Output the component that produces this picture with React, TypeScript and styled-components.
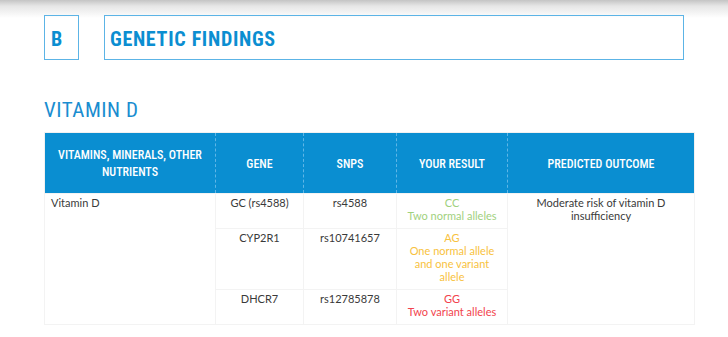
import styled, { createGlobalStyle } from "styled-components";

const GlobalStyle = createGlobalStyle`
  html, body {
    margin: 0;
    padding: 0;
    background: #ffffff;
  }
`;

const Page = styled.div`
  width: 728px;
  height: 337px;
  box-sizing: border-box;
  padding: 15px 34px 0 44px;
  background: linear-gradient(#c4c4c4 0px, #e6e6e6 6px, #ffffff 18px) top / 100% 20px no-repeat,
    #ffffff;
`;

const SectionBar = styled.div`
  display: flex;
  gap: 25px;
  width: 640px;
  height: 45px;
`;

const SectionBox = styled.div<{ $grow?: boolean }>`
  box-sizing: border-box;
  height: 45px;
  width: ${(p) => (p.$grow ? "auto" : "35px")};
  flex: ${(p) => (p.$grow ? "1" : "none")};
  border: 1.5px solid #5cb4e6;
  display: flex;
  align-items: center;
  padding-left: ${(p) => (p.$grow ? "5px" : "6px")};
  padding-top: 2px;
  color: #0b8ed1;
  font-family: "Roboto Condensed", "Liberation Sans Narrow", Roboto, sans-serif;
  font-weight: 700;
  font-size: 20px;
  letter-spacing: 0.7px;
`;

const Heading = styled.h2`
  margin: 38px 0 0;
  color: #1a8dd0;
  font-family: "Roboto Condensed", "Liberation Sans Narrow", Roboto, sans-serif;
  font-weight: 400;
  font-size: 21px;
  letter-spacing: 0.5px;
  line-height: 24px;
  height: 24px;
`;

const Table = styled.table`
  margin-top: 10px;
  width: 650px;
  border-collapse: collapse;
  table-layout: fixed;
  border: 1px solid #f1f1f1;
`;

const HeadCell = styled.th<{ $w: number }>`
  width: ${(p) => p.$w}px;
  height: 61px;
  box-sizing: border-box;
  padding: 2px 8px 0;
  background: #0a8ed1;
  color: #ffffff;
  font-family: "Roboto Condensed", "Liberation Sans Narrow", Roboto, sans-serif;
  font-weight: 500;
  font-size: 12px;
  letter-spacing: 0;
  line-height: 17px;
  text-align: center;
  vertical-align: middle;
  border-left: 1px dashed #5fb6e6;

  &:first-child {
    border-left: none;
  }
`;

const Cell = styled.td<{ $left?: boolean; $tone?: string }>`
  padding: 2px 6px 6px;
  font-family: Lato, "Noto Sans", sans-serif;
  font-size: 11px;
  line-height: 13px;
  color: ${(p) => p.$tone ?? "#3a3a3a"};
  text-align: ${(p) => (p.$left ? "left" : "center")};
  vertical-align: top;
  border: 1px solid #f3f3f3;
`;

const tones = {
  normal: "#9fd17e",
  mixed: "#f8c240",
  variant: "#f2434d",
};

const rows = [
  { gene: "GC (rs4588)", snp: "rs4588", geno: "CC", text: "Two normal alleles", tone: tones.normal },
  { gene: "CYP2R1", snp: "rs10741657", geno: "AG", text: "One normal allele and one variant allele", tone: tones.mixed },
  { gene: "DHCR7", snp: "rs12785878", geno: "GG", text: "Two variant alleles", tone: tones.variant },
];

const App = () => {
  return (
    <Page>
      <GlobalStyle />
      <SectionBar>
        <SectionBox>B</SectionBox>
        <SectionBox $grow>GENETIC FINDINGS</SectionBox>
      </SectionBar>
      <Heading>VITAMIN D</Heading>
      <Table>
        <thead>
          <tr>
            <HeadCell $w={171}>VITAMINS, MINERALS, OTHER NUTRIENTS</HeadCell>
            <HeadCell $w={88}>GENE</HeadCell>
            <HeadCell $w={93}>SNPS</HeadCell>
            <HeadCell $w={111}>YOUR RESULT</HeadCell>
            <HeadCell $w={187}>PREDICTED OUTCOME</HeadCell>
          </tr>
        </thead>
        <tbody>
          {rows.map((r, i) => (
            <tr key={r.snp}>
              {i === 0 && (
                <Cell $left rowSpan={3}>
                  Vitamin D
                </Cell>
              )}
              <Cell>{r.gene}</Cell>
              <Cell>{r.snp}</Cell>
              <Cell $tone={r.tone}>
                {r.geno}
                <br />
                {r.text}
              </Cell>
              {i === 0 && (
                <Cell rowSpan={3}>Moderate risk of vitamin D insufficiency</Cell>
              )}
            </tr>
          ))}
        </tbody>
      </Table>
    </Page>
  );
};

export default App;
